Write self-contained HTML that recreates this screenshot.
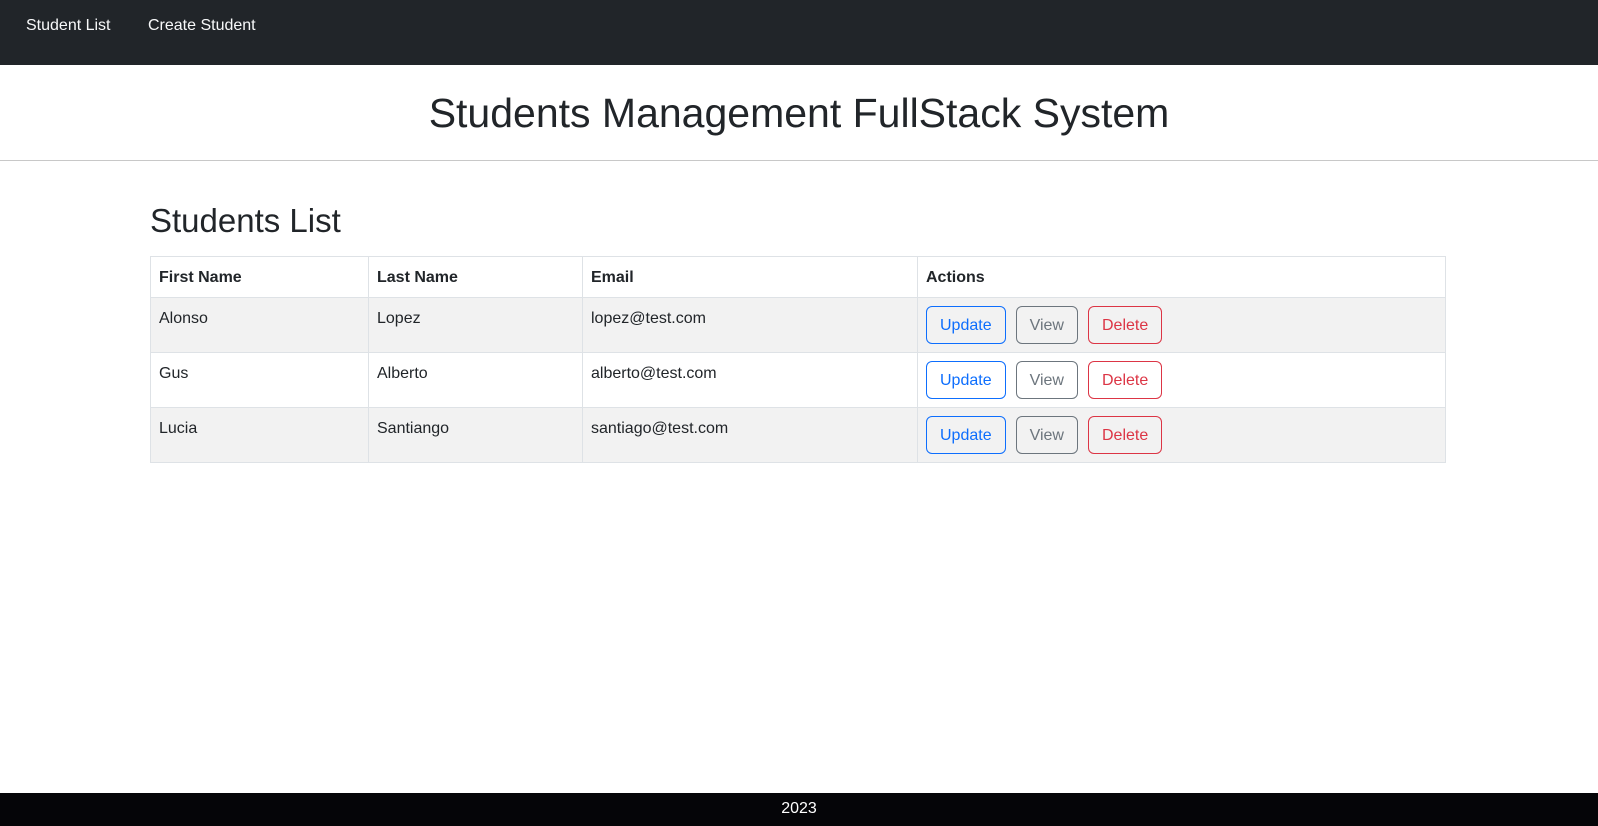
<!DOCTYPE html>
<html><head><meta charset="utf-8"><style>
*{box-sizing:border-box;margin:0;padding:0}
body{width:1598px;height:826px;position:relative;background:#fff;font-family:"Liberation Sans","DejaVu Sans",sans-serif;color:#212529;font-size:16px;overflow:hidden}
.nav{position:absolute;left:0;top:0;width:1598px;height:65px;background:#212529}
.nav span{position:absolute;top:16px;color:#f8f9fa;font-size:16px;line-height:20px}
.title{position:absolute;top:89px;left:0;width:1598px;text-align:center;font-size:41px;line-height:48px;font-weight:400}
.hr{position:absolute;top:160px;left:0;width:1598px;height:1px;background:#c8c8c8}
h2{position:absolute;left:150px;top:201px;font-size:33px;font-weight:400;line-height:40px}
table{position:absolute;left:150px;top:256px;width:1296px;border-collapse:collapse}
td,th{border:1px solid #dee2e6;padding:9px 8px 7px;text-align:left;vertical-align:top;line-height:24px}
th{font-weight:bold;height:41px}
tr.s td{background:#f2f2f2}
tbody td{height:55px}
td.a{padding:8px}
.b{display:inline-block;height:38px;line-height:38px;padding:0 13px;border:1px solid;border-radius:6px;margin-right:10px;font-size:16px;vertical-align:top}
.u{color:#0d6efd;border-color:#0d6efd}.v{color:#6c757d;border-color:#6c757d}.d{color:#dc3545;border-color:#dc3545}
.foot{position:absolute;left:0;top:793px;width:1598px;height:33px;background:#050508;color:#fff;text-align:center;line-height:32px;font-size:16px}
</style></head><body>
<div class="nav"><span style="left:26px">Student List</span><span style="left:148px">Create Student</span></div>
<div class="title">Students Management FullStack System</div>
<div class="hr"></div>
<h2>Students List</h2>
<table>
<colgroup><col style="width:218px"><col style="width:214px"><col style="width:335px"><col></colgroup>
<thead><tr><th>First Name</th><th>Last Name</th><th>Email</th><th>Actions</th></tr></thead>
<tbody>
<tr class="s"><td>Alonso</td><td>Lopez</td><td>lopez@test.com</td><td class="a"><span class="b u">Update</span><span class="b v">View</span><span class="b d">Delete</span></td></tr>
<tr><td>Gus</td><td>Alberto</td><td>alberto@test.com</td><td class="a"><span class="b u">Update</span><span class="b v">View</span><span class="b d">Delete</span></td></tr>
<tr class="s"><td>Lucia</td><td>Santiango</td><td>santiago@test.com</td><td class="a"><span class="b u">Update</span><span class="b v">View</span><span class="b d">Delete</span></td></tr>
</tbody></table>
<div class="foot">2023</div>
</body></html>
